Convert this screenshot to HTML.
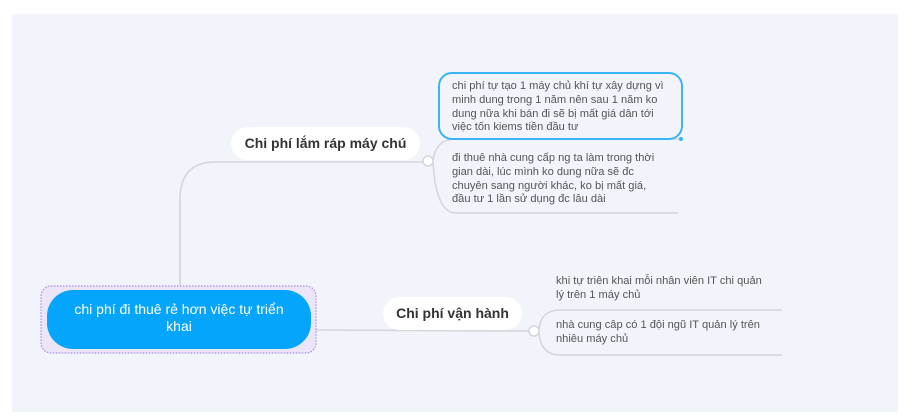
<!DOCTYPE html>
<html><head><meta charset="utf-8"><style>
body{margin:0;width:916px;height:418px;background:#fff;position:relative;overflow:hidden;font-family:"Liberation Sans",sans-serif}
.panel{position:absolute;left:12px;top:14px;width:886px;height:398px;background:#f1f4fa}
.abs{position:absolute}
.leaf{position:absolute;font-size:11.1px;line-height:13.8px;color:#555}
.pill{position:absolute;background:#fff;border-radius:17px;font-size:14px;color:#333;text-align:center;font-weight:600}
</style></head><body>
<div class="panel"></div>
<svg class="abs" style="left:0;top:0" width="916" height="418">
<g fill="none" stroke="#d3d6dc" stroke-width="1.6">
<path d="M180 287 L180 200 Q180 162 215 162 L423 162"/>
<path d="M433 160 Q436 139 456 139 L680 139"/>
<path d="M433 162 Q436 213 456 213 L678 213"/>
<path d="M316 330 L529 331"/>
<path d="M539 329 Q541 310 560 310 L782 310"/>
<path d="M539 333 Q541 355 560 355 L782 355"/>
</g>
<circle cx="428" cy="161" r="5" fill="#fff" stroke="#d3d6dc" stroke-width="1.5"/>
<circle cx="534" cy="331" r="5" fill="#fff" stroke="#d3d6dc" stroke-width="1.5"/>
<rect x="41" y="286" width="275" height="67" rx="10" fill="#ece5f8" stroke="#a98de6" stroke-width="1.2" stroke-dasharray="1.5 1.5"/>
<rect x="47" y="290" width="264" height="59" rx="26" fill="#04a5fb"/>
<rect x="439" y="73" width="243" height="66" rx="13" fill="none" stroke="#3ab4f5" stroke-width="2"/>
<circle cx="681" cy="139" r="2" fill="#3ab4f5"/>
</svg>
<div class="abs" style="left:47px;top:301px;width:264px;text-align:center;color:#fff;font-size:14px;line-height:17px">chi phí đi thuê rẻ hơn việc tự triển<br>khai</div>
<div class="pill" style="left:231px;top:127px;width:189px;height:33px;line-height:33px">Chi phí lắm ráp máy chú</div>
<div class="pill" style="left:383px;top:297px;width:139px;height:33px;line-height:33px">Chi phí vận hành</div>
<div class="leaf" style="left:452px;top:80px">chi phí tự tạo 1 máy chủ khí tự xây dựng vì<br>minh dung trong 1 năm nên sau 1 năm ko<br>dung nữa khi bán đi sẽ bị mất giá dân tới<br>việc tốn kiems tiền đầu tư</div>
<div class="leaf" style="left:452px;top:152px">đi thuê nhà cung cấp ng ta làm trong thời<br>gian dài, lúc mình ko dung nữa sẽ đc<br>chuyên sang người khác, ko bị mất giá,<br>đầu tư 1 lần sử dụng đc lâu dài</div>
<div class="leaf" style="left:556px;top:275px">khi tự triên khai mỗi nhân viên IT chi quản<br>lý trên 1 máy chủ</div>
<div class="leaf" style="left:556px;top:319px">nhà cung câp có 1 đội ngũ IT quản lý trên<br>nhiêu máy chủ</div>
</body></html>
